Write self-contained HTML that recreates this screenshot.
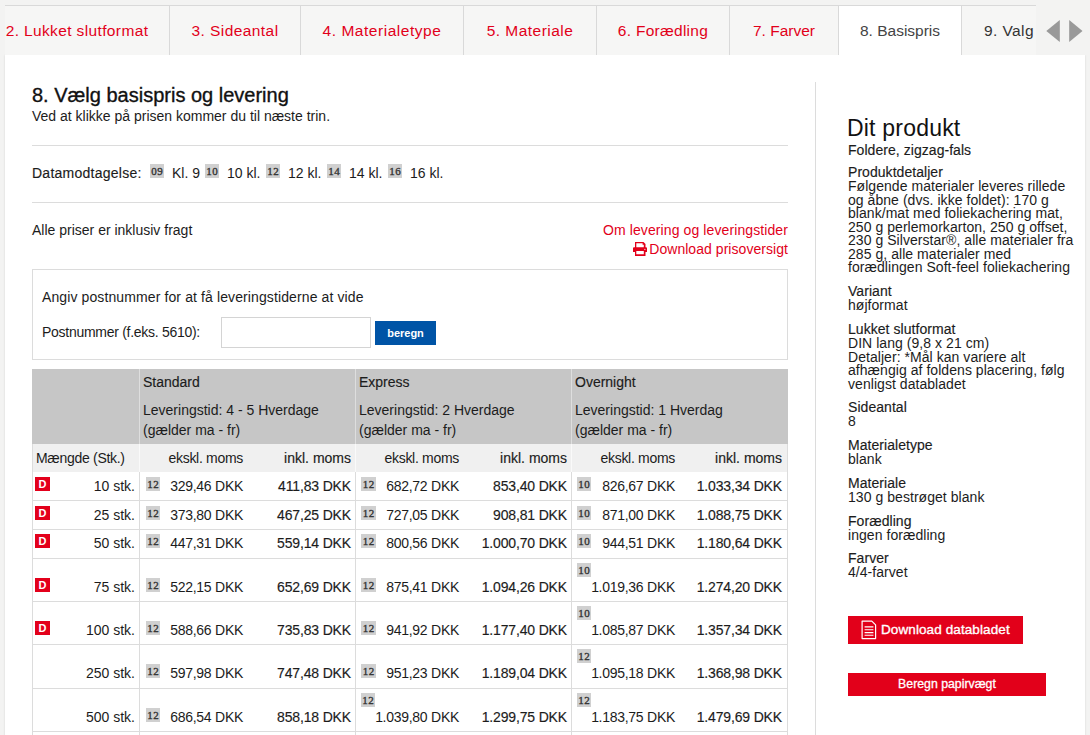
<!DOCTYPE html>
<html lang="da">
<head>
<meta charset="utf-8">
<title>Basispris</title>
<style>
*{box-sizing:border-box;margin:0;padding:0}
html,body{width:1090px;height:735px;overflow:hidden}
body{background:#f3f3f2;font-family:"Liberation Sans",sans-serif;color:#1c1c1c;font-size:14px;position:relative}
.tabs{z-index:1;position:absolute;left:5px;top:5px;width:1031px;height:50px;background:#f6f6f5;border-top:1px solid #d9d9d9;overflow:hidden;white-space:nowrap}
.tab{position:absolute;top:0;height:49px;line-height:49px;text-align:center;color:#e2001a;font-size:15.5px;border-right:1px solid #d9d9d9}
.tab.act{background:#fff;color:#444}
.arrows{z-index:1;position:absolute;left:1036px;top:5px;width:54px;height:50px;background:#f3f3f2}
.box{position:absolute;left:5px;top:55px;width:1080px;height:690px;background:#fff;box-shadow:0 0 2px rgba(0,0,0,.12)}
h1{position:absolute;left:32px;top:84px;font-size:20px;font-weight:normal;color:#111;line-height:22px;white-space:nowrap;-webkit-text-stroke:0.35px #111}
h2{position:absolute;left:847px;top:115px;letter-spacing:0.2px;font-size:23px;font-weight:normal;color:#111;line-height:26px;white-space:nowrap}
.t{position:absolute;white-space:nowrap;line-height:16px}
.m{-webkit-text-stroke:0.15px #1c1c1c}
.p{letter-spacing:-0.3px;word-spacing:0.3px}
.hr{position:absolute;left:32px;width:756px;height:1px;background:#dcdcdc}
.red{color:#e2001a}
.bdg{position:absolute;background:#d0d0d0;color:#333;font-family:"Liberation Serif",serif;font-size:11px;line-height:14px;padding-top:0px;height:14px;width:14px;overflow:hidden;text-align:center;letter-spacing:0.4px;text-indent:0.4px;-webkit-text-stroke:0.35px #333}
.bdg i{font-style:normal}
.pbox{position:absolute;left:32px;top:269px;width:756px;height:91px;border:1px solid #dcdcdc;background:#fff}
.inp{position:absolute;left:221px;top:317px;width:150px;height:31px;border:1px solid #d4d4d4;background:#fff}
.btnb{position:absolute;left:375px;top:321px;width:61px;height:24px;background:#0054a6;color:#fff;font-size:11px;font-weight:bold;text-align:center;line-height:24px}
.th{position:absolute;top:369px;height:75px;background:#c6c6c6}
.sh{position:absolute;left:32px;top:444px;width:756px;height:28px;background:#f0f0f0}
.vl{position:absolute;width:1px;background:#dcdcdc}
.hl{position:absolute;left:32px;width:756px;height:1px;background:#dcdcdc}
.r{text-align:right}
.dd{position:absolute;left:35px;width:15px;height:14px;background:#e3001b;color:#fff;font-size:11px;font-weight:bold;line-height:14px;text-align:center}
.side{position:absolute;left:815px;top:82px;width:1px;height:653px;background:#dcdcdc}
.s{position:absolute;left:848px;white-space:nowrap;line-height:13.55px;font-size:14px;letter-spacing:0.05px}
.rb{position:absolute;left:848px;background:#e2001a;color:#fff;font-size:13px;white-space:nowrap}
</style>
</head>
<body>
<div class="tabs">
<div class="tab" style="left:-30px;width:195px;padding-left:10px;letter-spacing:0.37px">2. Lukket slutformat</div>
<div class="tab" style="left:165px;width:131px;letter-spacing:0.43px">3. Sideantal</div>
<div class="tab" style="left:296px;width:163px;letter-spacing:0.53px">4. Materialetype</div>
<div class="tab" style="left:459px;width:133px;letter-spacing:0.48px">5. Materiale</div>
<div class="tab" style="left:592px;width:133px;letter-spacing:0.27px">6. Forædling</div>
<div class="tab" style="left:725px;width:109px">7. Farver</div>
<div class="tab act" style="left:834px;width:123px;letter-spacing:0px">8. Basispris</div>
<div class="tab" style="left:957px;width:133px;text-align:left;padding-left:22px;border:0;color:#333;letter-spacing:0.4px">9. Valg</div>
</div>
<div class="arrows"><svg width="54" height="50" viewBox="0 0 54 50"><polygon points="10.300,26 23.800,14.900 23.800,37.100" fill="#999"/><polygon points="46.500,26 33.200,14.900 33.200,37.100" fill="#999"/></svg></div>
<div class="box"></div>
<h1>8. Vælg basispris og levering</h1>
<div class="t" style="left:32px;top:108px">Ved at klikke på prisen kommer du til næste trin.</div>
<div class="hr" style="top:145px"></div>
<div class="t m" style="left:32px;top:165px;letter-spacing:0.25px">Datamodtagelse:</div>
<div class="bdg" style="left:150px;top:164px"><i>09</i></div><div class="t" style="left:172px;top:165px">Kl. 9</div>
<div class="bdg" style="left:205px;top:164px"><i>10</i></div><div class="t" style="left:227px;top:165px">10 kl.</div>
<div class="bdg" style="left:266px;top:164px"><i>12</i></div><div class="t" style="left:288px;top:165px">12 kl.</div>
<div class="bdg" style="left:327px;top:164px"><i>14</i></div><div class="t" style="left:349px;top:165px">14 kl.</div>
<div class="bdg" style="left:388px;top:164px"><i>16</i></div><div class="t" style="left:410px;top:165px">16 kl.</div>
<div class="hr" style="top:202px"></div>
<div class="t" style="left:32px;top:222px">Alle priser er inklusiv fragt</div>
<div class="t red r" style="right:302px;top:222px;letter-spacing:0.1px">Om levering og leveringstider</div>
<svg style="position:absolute;left:632.700px;top:241.900px" width="14" height="15" viewBox="0 0 14 15"><path d="M2 0H10.500L12.500 2V5.300H13a1 1 0 0 1 1 1V10.100H12.500V14.100H2V10.100H0V6.300a1 1 0 0 1 1-1H2ZM3.300 1.200V5.300H10.800V2.800H9.600V1.200ZM3.300 9.100H10.800V12.300H3.300ZM11.300 7.300a.6.6 0 1 0 1.200 0a.6.6 0 1 0-1.200 0Z" fill="#e2001a" fill-rule="evenodd"/></svg>
<div class="t red r" style="right:302px;top:241px;letter-spacing:0.05px">Download prisoversigt</div>
<div class="pbox"></div>
<div class="t" style="left:42px;top:289px;letter-spacing:0.11px">Angiv postnummer for at få leveringstiderne at vide</div>
<div class="t" style="left:42px;top:324px;letter-spacing:-0.28px">Postnummer (f.eks. 5610):</div>
<div class="inp"></div>
<div class="btnb">beregn</div>
<div class="th" style="left:32px;width:107px"></div>
<div class="th" style="left:140px;width:215px"></div>
<div class="t m" style="left:143px;top:374px">Standard</div>
<div class="t" style="left:143px;top:402px">Leveringstid: 4 - 5 Hverdage</div>
<div class="t" style="left:143px;top:422px">(gælder ma - fr)</div>
<div class="th" style="left:356px;width:215px"></div>
<div class="t m" style="left:359px;top:374px">Express</div>
<div class="t" style="left:359px;top:402px">Leveringstid: 2 Hverdage</div>
<div class="t" style="left:359px;top:422px">(gælder ma - fr)</div>
<div class="th" style="left:572px;width:216px"></div>
<div class="t m" style="left:575px;top:374px">Overnight</div>
<div class="t" style="left:575px;top:402px">Leveringstid: 1 Hverdag</div>
<div class="t" style="left:575px;top:422px">(gælder ma - fr)</div>
<div class="sh"></div>
<div class="t" style="left:36px;top:450px;letter-spacing:-0.3px">Mængde (Stk.)</div>
<div class="t r" style="left:140px;width:103px;top:450px;letter-spacing:-0.3px">ekskl. moms</div>
<div class="t r m" style="left:140px;width:211px;top:450px">inkl. moms</div>
<div class="t r" style="left:356px;width:103px;top:450px;letter-spacing:-0.3px">ekskl. moms</div>
<div class="t r m" style="left:356px;width:211px;top:450px">inkl. moms</div>
<div class="t r" style="left:572px;width:103px;top:450px;letter-spacing:-0.3px">ekskl. moms</div>
<div class="t r m" style="left:572px;width:210px;top:450px">inkl. moms</div>
<div class="dd" style="top:477px">D</div>
<div class="t r" style="left:32px;width:103px;top:478px">10 stk.</div>
<div class="bdg" style="left:146px;top:477px"><i>12</i></div>
<div class="t r p" style="left:140px;width:103px;top:478px">329,46 DKK</div>
<div class="t r m" style="left:140px;width:211px;top:478px;letter-spacing:-0.15px">411,83 DKK</div>
<div class="bdg" style="left:361px;top:477px;width:15px"><i>12</i></div>
<div class="t r p" style="left:356px;width:103px;top:478px">682,72 DKK</div>
<div class="t r m" style="left:356px;width:211px;top:478px;letter-spacing:-0.15px">853,40 DKK</div>
<div class="bdg" style="left:577px;top:477px"><i>10</i></div>
<div class="t r p" style="left:572px;width:103px;top:478px">826,67 DKK</div>
<div class="t r m" style="left:572px;width:210px;top:478px;letter-spacing:-0.15px">1.033,34 DKK</div>
<div class="hl" style="top:500px"></div>
<div class="dd" style="top:506px">D</div>
<div class="t r" style="left:32px;width:103px;top:507px">25 stk.</div>
<div class="bdg" style="left:146px;top:506px"><i>12</i></div>
<div class="t r p" style="left:140px;width:103px;top:507px">373,80 DKK</div>
<div class="t r m" style="left:140px;width:211px;top:507px;letter-spacing:-0.15px">467,25 DKK</div>
<div class="bdg" style="left:361px;top:506px;width:15px"><i>12</i></div>
<div class="t r p" style="left:356px;width:103px;top:507px">727,05 DKK</div>
<div class="t r m" style="left:356px;width:211px;top:507px;letter-spacing:-0.15px">908,81 DKK</div>
<div class="bdg" style="left:577px;top:506px"><i>10</i></div>
<div class="t r p" style="left:572px;width:103px;top:507px">871,00 DKK</div>
<div class="t r m" style="left:572px;width:210px;top:507px;letter-spacing:-0.15px">1.088,75 DKK</div>
<div class="hl" style="top:529px"></div>
<div class="dd" style="top:534px">D</div>
<div class="t r" style="left:32px;width:103px;top:535px">50 stk.</div>
<div class="bdg" style="left:146px;top:534px"><i>12</i></div>
<div class="t r p" style="left:140px;width:103px;top:535px">447,31 DKK</div>
<div class="t r m" style="left:140px;width:211px;top:535px;letter-spacing:-0.15px">559,14 DKK</div>
<div class="bdg" style="left:361px;top:534px;width:15px"><i>12</i></div>
<div class="t r p" style="left:356px;width:103px;top:535px">800,56 DKK</div>
<div class="t r m" style="left:356px;width:211px;top:535px;letter-spacing:-0.15px">1.000,70 DKK</div>
<div class="bdg" style="left:577px;top:534px"><i>10</i></div>
<div class="t r p" style="left:572px;width:103px;top:535px">944,51 DKK</div>
<div class="t r m" style="left:572px;width:210px;top:535px;letter-spacing:-0.15px">1.180,64 DKK</div>
<div class="hl" style="top:558px"></div>
<div class="dd" style="top:578px">D</div>
<div class="t r" style="left:32px;width:103px;top:579px">75 stk.</div>
<div class="bdg" style="left:146px;top:578px"><i>12</i></div>
<div class="t r p" style="left:140px;width:103px;top:579px">522,15 DKK</div>
<div class="t r m" style="left:140px;width:211px;top:579px;letter-spacing:-0.15px">652,69 DKK</div>
<div class="bdg" style="left:361px;top:578px;width:15px"><i>12</i></div>
<div class="t r p" style="left:356px;width:103px;top:579px">875,41 DKK</div>
<div class="t r m" style="left:356px;width:211px;top:579px;letter-spacing:-0.15px">1.094,26 DKK</div>
<div class="bdg" style="left:577px;top:563px"><i>10</i></div>
<div class="t r p" style="left:572px;width:103px;top:579px">1.019,36 DKK</div>
<div class="t r m" style="left:572px;width:210px;top:579px;letter-spacing:-0.15px">1.274,20 DKK</div>
<div class="hl" style="top:601px"></div>
<div class="dd" style="top:621px">D</div>
<div class="t r" style="left:32px;width:103px;top:622px">100 stk.</div>
<div class="bdg" style="left:146px;top:621px"><i>12</i></div>
<div class="t r p" style="left:140px;width:103px;top:622px">588,66 DKK</div>
<div class="t r m" style="left:140px;width:211px;top:622px;letter-spacing:-0.15px">735,83 DKK</div>
<div class="bdg" style="left:361px;top:621px;width:15px"><i>12</i></div>
<div class="t r p" style="left:356px;width:103px;top:622px">941,92 DKK</div>
<div class="t r m" style="left:356px;width:211px;top:622px;letter-spacing:-0.15px">1.177,40 DKK</div>
<div class="bdg" style="left:577px;top:606px"><i>10</i></div>
<div class="t r p" style="left:572px;width:103px;top:622px">1.085,87 DKK</div>
<div class="t r m" style="left:572px;width:210px;top:622px;letter-spacing:-0.15px">1.357,34 DKK</div>
<div class="hl" style="top:644px"></div>
<div class="t r" style="left:32px;width:103px;top:665px">250 stk.</div>
<div class="bdg" style="left:146px;top:664px"><i>12</i></div>
<div class="t r p" style="left:140px;width:103px;top:665px">597,98 DKK</div>
<div class="t r m" style="left:140px;width:211px;top:665px;letter-spacing:-0.15px">747,48 DKK</div>
<div class="bdg" style="left:361px;top:664px;width:15px"><i>12</i></div>
<div class="t r p" style="left:356px;width:103px;top:665px">951,23 DKK</div>
<div class="t r m" style="left:356px;width:211px;top:665px;letter-spacing:-0.15px">1.189,04 DKK</div>
<div class="bdg" style="left:577px;top:649px"><i>12</i></div>
<div class="t r p" style="left:572px;width:103px;top:665px">1.095,18 DKK</div>
<div class="t r m" style="left:572px;width:210px;top:665px;letter-spacing:-0.15px">1.368,98 DKK</div>
<div class="hl" style="top:688px"></div>
<div class="t r" style="left:32px;width:103px;top:709px">500 stk.</div>
<div class="bdg" style="left:146px;top:708px"><i>12</i></div>
<div class="t r p" style="left:140px;width:103px;top:709px">686,54 DKK</div>
<div class="t r m" style="left:140px;width:211px;top:709px;letter-spacing:-0.15px">858,18 DKK</div>
<div class="bdg" style="left:361px;top:693px"><i>12</i></div>
<div class="t r p" style="left:356px;width:103px;top:709px">1.039,80 DKK</div>
<div class="t r m" style="left:356px;width:211px;top:709px;letter-spacing:-0.15px">1.299,75 DKK</div>
<div class="bdg" style="left:577px;top:693px"><i>12</i></div>
<div class="t r p" style="left:572px;width:103px;top:709px">1.183,75 DKK</div>
<div class="t r m" style="left:572px;width:210px;top:709px;letter-spacing:-0.15px">1.479,69 DKK</div>
<div class="hl" style="top:731px"></div>
<div class="vl" style="left:32px;top:472px;height:263px"></div>
<div class="vl" style="left:139px;top:472px;height:263px"></div>
<div class="vl" style="left:355px;top:472px;height:263px"></div>
<div class="vl" style="left:571px;top:472px;height:263px"></div>
<div class="vl" style="left:787px;top:472px;height:263px"></div>
<div class="vl" style="left:32px;top:444px;height:28px"></div>
<div class="vl" style="left:787px;top:444px;height:28px"></div>
<div class="vl" style="left:139px;top:444px;height:28px;background:#fafafa"></div>
<div class="vl" style="left:139px;top:369px;height:75px;background:#dedede"></div>
<div class="vl" style="left:355px;top:444px;height:28px;background:#fafafa"></div>
<div class="vl" style="left:355px;top:369px;height:75px;background:#dedede"></div>
<div class="vl" style="left:571px;top:444px;height:28px;background:#fafafa"></div>
<div class="vl" style="left:571px;top:369px;height:75px;background:#dedede"></div>
<div class="side"></div>
<h2>Dit produkt</h2>
<div class="s m" style="top:144px">Foldere, zigzag-fals</div>
<div class="s m" style="top:166px">Produktdetaljer</div>
<div class="s" style="top:180px">Følgende materialer leveres rillede<br>og åbne (dvs. ikke foldet): 170 g<br>blank/mat med foliekachering mat,<br>250 g perlemorkarton, 250 g offset,<br>230 g Silverstar®, alle materialer fra<br>285 g, alle materialer med<br>forædlingen Soft-feel foliekachering</div>
<div class="s m" style="top:285px">Variant</div>
<div class="s" style="top:299px">højformat</div>
<div class="s m" style="top:323px">Lukket slutformat</div>
<div class="s" style="top:337px">DIN lang (9,8 x 21 cm)<br>Detaljer: *Mål kan variere alt<br>afhængig af foldens placering, følg<br>venligst databladet</div>
<div class="s m" style="top:401px">Sideantal</div>
<div class="s" style="top:415px">8</div>
<div class="s m" style="top:439px">Materialetype</div>
<div class="s" style="top:453px">blank</div>
<div class="s m" style="top:477px">Materiale</div>
<div class="s" style="top:491px">130 g bestrøget blank</div>
<div class="s m" style="top:515px">Forædling</div>
<div class="s" style="top:529px">ingen forædling</div>
<div class="s m" style="top:552px">Farver</div>
<div class="s" style="top:566px">4/4-farvet</div>
<div class="rb m" style="top:616px;width:175px;height:28px;line-height:28px;padding-left:33px;font-size:13.5px;letter-spacing:0.1px;-webkit-text-stroke:0.35px #fff">Download databladet</div>
<svg style="position:absolute;left:861px;top:620px" width="16" height="20" viewBox="0 0 16 20"><path d="M1.100 1.100H10.800L14.600 4.900V18.600H1.100Z" fill="none" stroke="#fff" stroke-width="1.200" stroke-linejoin="round"/><path d="M3.600 6.900h8.800M3.600 9.700h8.800M3.600 12.600h8.800M3.600 15.300h8.800" stroke="#fff" stroke-width="1.100"/></svg>
<div class="rb m" style="top:673px;width:198px;height:23px;line-height:23px;text-align:center;font-size:12.3px;-webkit-text-stroke:0.3px #fff">Beregn papirvægt</div>
</body>
</html>
